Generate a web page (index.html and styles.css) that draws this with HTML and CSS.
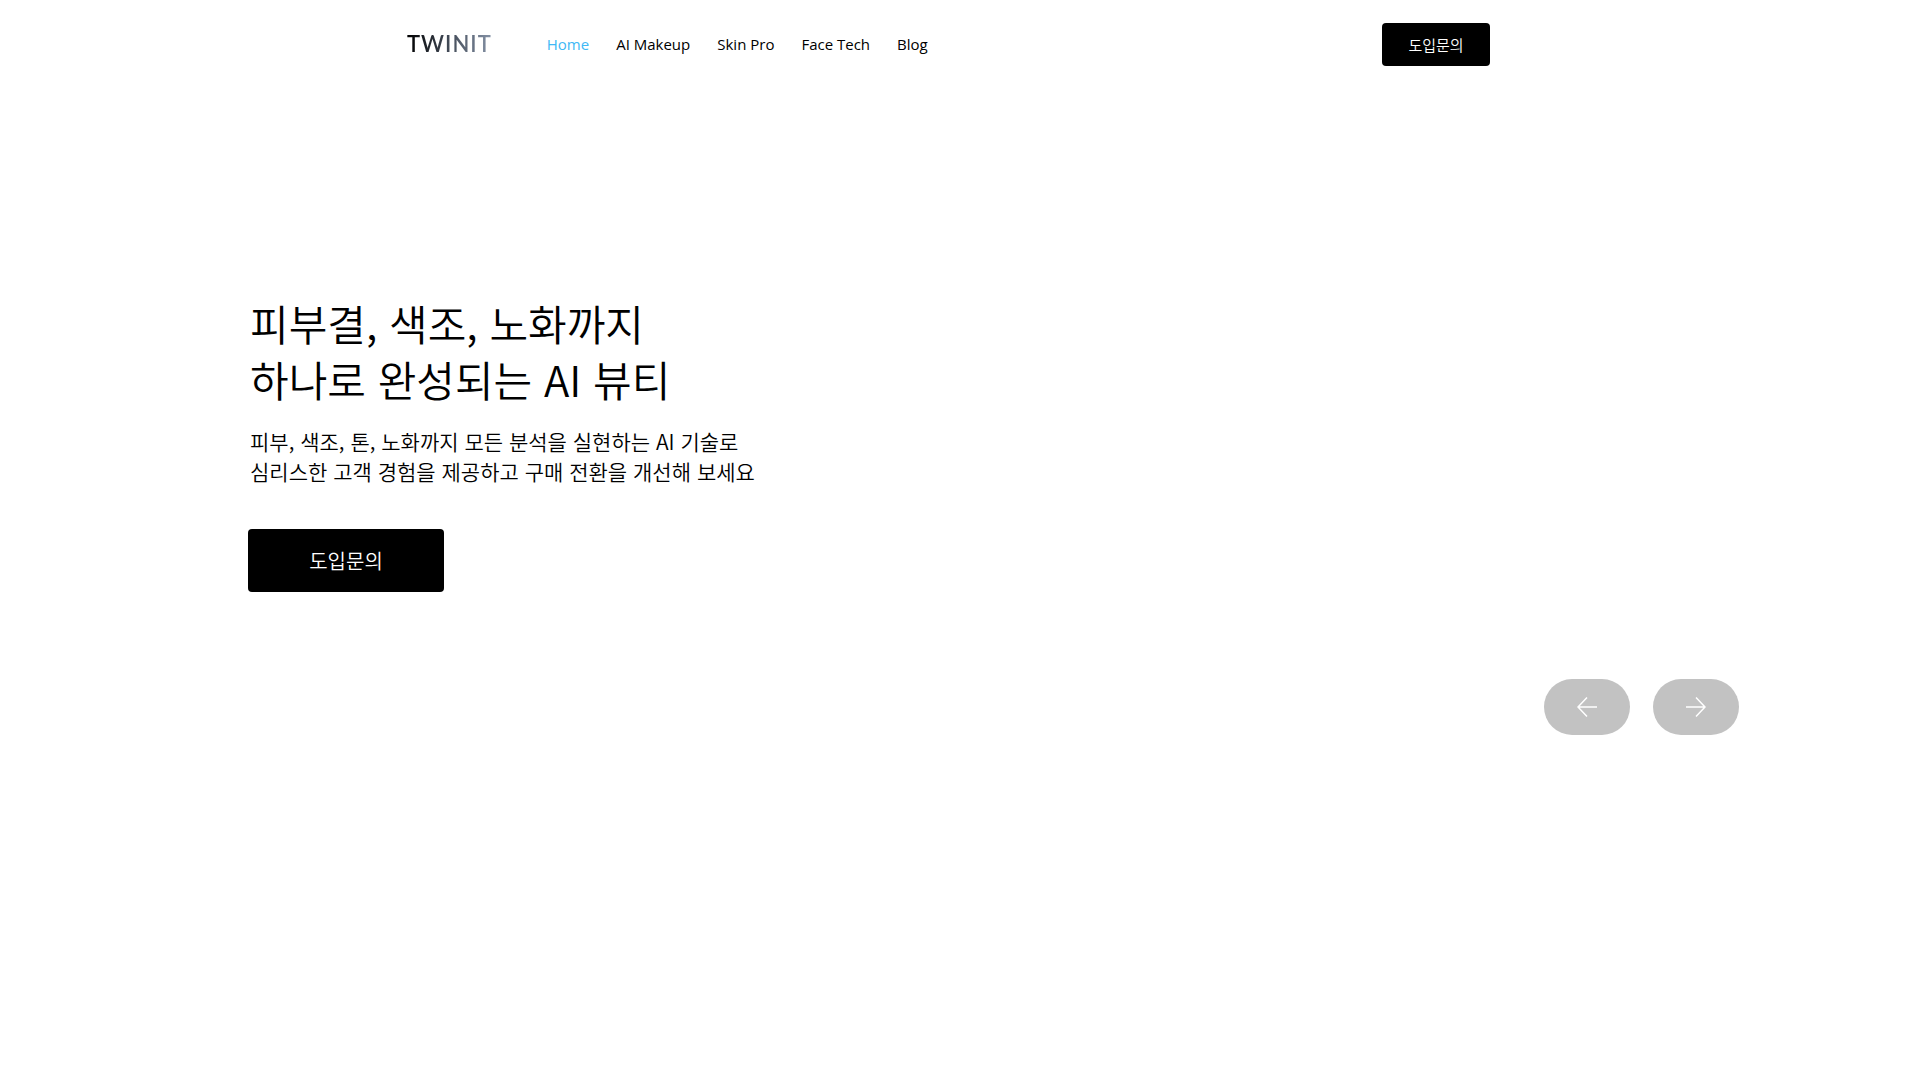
FILE: index.html
```html
<!DOCTYPE html>
<html lang="ko">

<head>
  <meta charset="UTF-8">
  <meta name="viewport" content="width=device-width, initial-scale=1.0">
  <title>TWINIT</title>
  <link rel="stylesheet" href="styles.css">
</head>

<body>
  <header class="header">
    <a class="logo" href="#">TWINIT</a>
    <nav class="nav">
      <a class="nav-link active" href="#">Home</a>
      <a class="nav-link" href="#">AI Makeup</a>
      <a class="nav-link" href="#">Skin Pro</a>
      <a class="nav-link" href="#">Face Tech</a>
      <a class="nav-link" href="#">Blog</a>
    </nav>
    <button class="btn btn-small" type="button">도입문의</button>
  </header>

  <main class="hero">
    <h1 class="title">피부결, 색조, 노화까지<br>하나로 완성되는 AI 뷰티</h1>
    <p class="desc">피부, 색조, 톤, 노화까지 모든 분석을 실현하는 AI 기술로<br>심리스한 고객 경험을 제공하고 구매 전환을 개선해 보세요</p>
    <button class="btn btn-large" type="button">도입문의</button>
    <div class="arrows">
      <button class="arrow" type="button" aria-label="이전">
        <svg width="20" height="20" viewBox="0 0 20 20">
          <path d="M20 10H1M10 .5L1 10l9 9.500" />
        </svg>
      </button>
      <button class="arrow" type="button" aria-label="다음">
        <svg width="20" height="20" viewBox="0 0 20 20">
          <path d="M0 10h19M10 .5L19 10l-9 9.500" />
        </svg>
      </button>
    </div>
  </main>
</body>

</html>
```

FILE: styles.css
```css
* {
  box-sizing: border-box;
}

body {
  margin: 0;
  background: #fff;
  color: #000;
  font-family: "Noto Sans CJK KR", sans-serif;
}

.header {
  display: flex;
  align-items: center;
  height: 88px;
  padding: 0 430px 0 407px;
}

.logo {
  font-family: Lato, sans-serif;
  font-size: 22px;
  font-weight: 600;
  line-height: 24px;
  letter-spacing: 1px;
  text-decoration: none;
  color: transparent;
  background: linear-gradient(90deg, #000, #3c4450 45%, #8592a6);
  -webkit-background-clip: text;
  background-clip: text;
}

.nav {
  display: flex;
  gap: 27px;
  margin-left: 55px;
}

.nav-link {
  font-family: "Open Sans", sans-serif;
  font-size: 15px;
  line-height: 20px;
  color: #000;
  text-decoration: none;
}

.nav-link.active {
  color: #40b8f5;
}

.btn {
  border: 0;
  border-radius: 4px;
  background: #000;
  color: #fff;
  font-family: inherit;
  font-weight: 350;
  cursor: pointer;
}

.btn-small {
  width: 108px;
  height: 43px;
  margin-left: auto;
  font-size: 15px;
}

.btn-large {
  width: 196px;
  height: 63px;
  font-size: 20px;
}

.hero {
  padding: 207px 181px 0 248px;
}

.title {
  margin: 0 0 19px 2px;
  font-size: 42px;
  font-weight: 350;
  line-height: 56px;
}

.desc {
  margin: 0 0 43px 2px;
  font-size: 21px;
  font-weight: 350;
  line-height: 30px;
}

.arrows {
  display: flex;
  justify-content: flex-end;
  gap: 23px;
  margin-top: 87px;
}

.arrow {
  display: flex;
  align-items: center;
  justify-content: center;
  width: 86px;
  height: 56px;
  padding: 0;
  border: 0;
  border-radius: 28px;
  background: #c2c2c2;
  cursor: pointer;
}

.arrow path {
  fill: none;
  stroke: #fff;
  stroke-width: 1.5;
}
```
